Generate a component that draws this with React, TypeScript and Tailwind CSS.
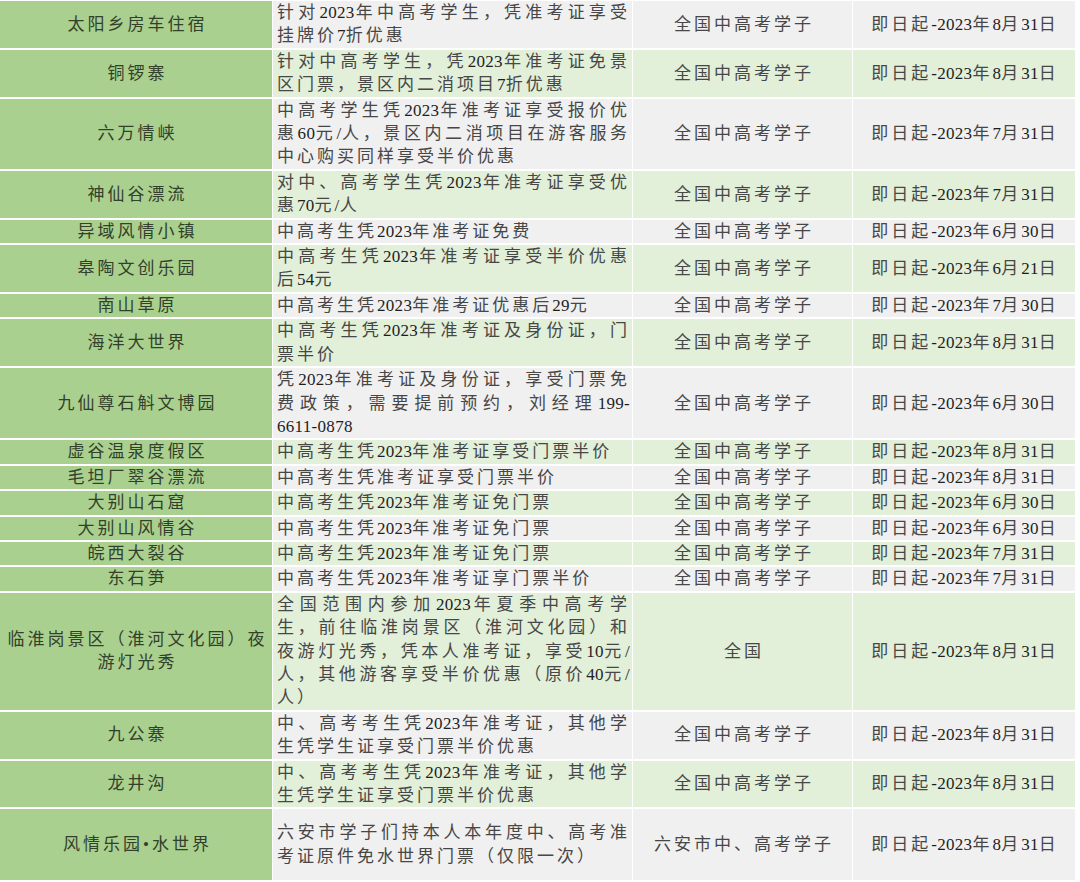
const rows: { name: string[]; desc: string[]; who: string; until: string; minLines?: number }[] = [
  { name: ["太阳乡房车住宿"], desc: ["针对2023年中高考学生，凭准考证享受", "挂牌价7折优惠"], who: "全国中高考学子", until: "8月31日" },
  { name: ["铜锣寨"], desc: ["针对中高考学生，凭2023年准考证免景", "区门票，景区内二消项目7折优惠"], who: "全国中高考学子", until: "8月31日" },
  {
    name: ["六万情峡"],
    desc: ["中高考学生凭2023年准考证享受报价优", "惠60元/人，景区内二消项目在游客服务", "中心购买同样享受半价优惠"],
    who: "全国中高考学子",
    until: "7月31日",
  },
  { name: ["神仙谷漂流"], desc: ["对中、高考学生凭2023年准考证享受优", "惠70元/人"], who: "全国中高考学子", until: "7月31日" },
  { name: ["异域风情小镇"], desc: ["中高考生凭2023年准考证免费"], who: "全国中高考学子", until: "6月30日" },
  { name: ["皋陶文创乐园"], desc: ["中高考生凭2023年准考证享受半价优惠", "后54元"], who: "全国中高考学子", until: "6月21日" },
  { name: ["南山草原"], desc: ["中高考生凭2023年准考证优惠后29元"], who: "全国中高考学子", until: "7月30日" },
  { name: ["海洋大世界"], desc: ["中高考生凭2023年准考证及身份证，门", "票半价"], who: "全国中高考学子", until: "8月31日" },
  {
    name: ["九仙尊石斛文博园"],
    desc: ["凭2023年准考证及身份证，享受门票免", "费政策，需要提前预约，刘经理199-", "6611-0878"],
    who: "全国中高考学子",
    until: "6月30日",
  },
  { name: ["虚谷温泉度假区"], desc: ["中高考生凭2023年准考证享受门票半价"], who: "全国中高考学子", until: "8月31日" },
  { name: ["毛坦厂翠谷漂流"], desc: ["中高考生凭准考证享受门票半价"], who: "全国中高考学子", until: "8月31日" },
  { name: ["大别山石窟"], desc: ["中高考生凭2023年准考证免门票"], who: "全国中高考学子", until: "6月30日" },
  { name: ["大别山风情谷"], desc: ["中高考生凭2023年准考证免门票"], who: "全国中高考学子", until: "6月30日" },
  { name: ["皖西大裂谷"], desc: ["中高考生凭2023年准考证免门票"], who: "全国中高考学子", until: "7月31日" },
  { name: ["东石笋"], desc: ["中高考生凭2023年准考证享门票半价"], who: "全国中高考学子", until: "7月31日" },
  {
    name: ["临淮岗景区（淮河文化园）夜", "游灯光秀"],
    desc: [
      "全国范围内参加2023年夏季中高考学",
      "生，前往临淮岗景区（淮河文化园）和",
      "夜游灯光秀，凭本人准考证，享受10元/",
      "人，其他游客享受半价优惠（原价40元/",
      "人）",
    ],
    who: "全国",
    until: "8月31日",
  },
  { name: ["九公寨"], desc: ["中、高考考生凭2023年准考证，其他学", "生凭学生证享受门票半价优惠"], who: "全国中高考学子", until: "8月31日" },
  { name: ["龙井沟"], desc: ["中、高考考生凭2023年准考证，其他学", "生凭学生证享受门票半价优惠"], who: "全国中高考学子", until: "8月31日" },
  {
    name: ["风情乐园•水世界"],
    desc: ["六安市学子们持本人本年度中、高考准", "考证原件免水世界门票（仅限一次）"],
    who: "六安市中、高考学子",
    until: "8月31日",
    minLines: 3,
  },
];

// latin runs (digits, dash, slash) keep tight spacing like the original sheet
const Txt = ({ s }: { s: string }) => (
  <>
    {s.split(/([0-9\-\/]+)/).map((part, i) =>
      /^[0-9\-\/]+$/.test(part) ? (
        <span key={i} className="tracking-[0.3px] text-[#1e1e1e]">
          {part}
        </span>
      ) : (
        <span key={i}>{part}</span>
      )
    )}
  </>
);

export default function App() {
  return (
    <div className="min-h-[882px] w-[1080px] bg-white pt-px font-['Liberation_Serif','Noto_Sans_CJK_SC',serif] text-[17px] leading-[23.4px] tracking-[3px] text-[#474747]">
      <div className="grid w-[1075px] grid-cols-[272px_359px_219px_222px] gap-x-px gap-y-[2px]">
        {rows.map((r, idx) => {
          const rowBg = idx % 2 === 0 ? "bg-[#f0f0f0]" : "bg-[#e2efd9]";
          const minH = r.minLines === 3 ? "min-h-[70.2px]" : "";
          return (
            <div key={idx} className="contents">
              <div className={`flex flex-col justify-center bg-[#a9d08e] text-center text-[#33402b] ${minH}`}>
                {r.name.map((l, i) => (
                  <div key={i} className={i === 0 ? "whitespace-nowrap pl-[3px]" : "pl-[3px]"}>
                    {l}
                  </div>
                ))}
              </div>
              <div className={`flex flex-col justify-center pl-[4px] pr-[2px] ${rowBg} ${minH}`}>
                {r.desc.map((l, i) => {
                  const last = i === r.desc.length - 1;
                  return (
                    <div
                      key={i}
                      className={last ? "whitespace-nowrap" : "text-justify [text-align-last:justify] whitespace-nowrap"}
                    >
                      <Txt s={l} />
                    </div>
                  );
                })}
              </div>
              <div className={`flex items-center justify-center pl-[3px] ${rowBg}`}>{r.who}</div>
              <div className={`flex items-center justify-center pl-[2px] ${rowBg}`}>
                <span>
                  即日起<Txt s={"-2023"} />年<Txt s={r.until.split("月")[0]} />月
                  <Txt s={r.until.split("月")[1].replace("日", "")} />日
                </span>
              </div>
            </div>
          );
        })}
      </div>
    </div>
  );
}
